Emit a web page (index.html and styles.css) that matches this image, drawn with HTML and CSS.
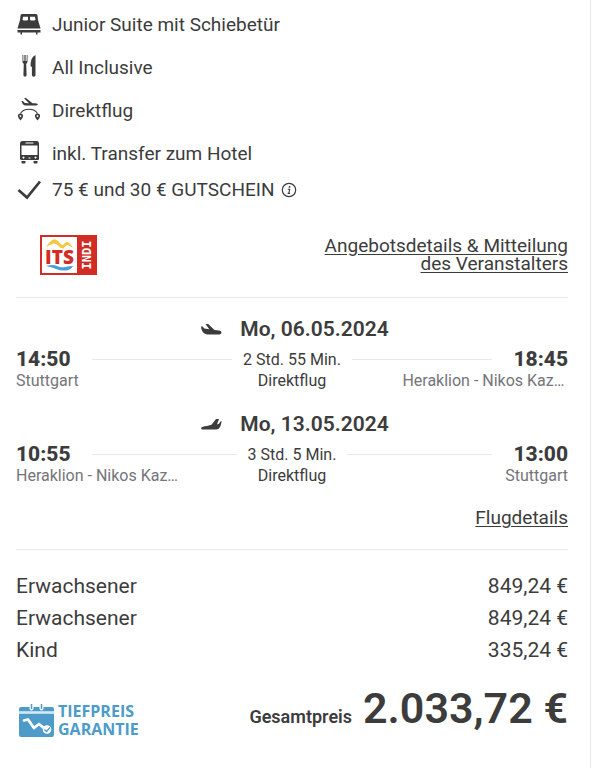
FILE: index.html
```html
<!DOCTYPE html>
<html lang="de">
<head>
<meta charset="utf-8">
<meta name="viewport" content="width=device-width, initial-scale=1">
<title>Angebot</title>
<link rel="stylesheet" href="styles.css">
</head>
<body>
<main class="offer">
  <ul class="features">
    <li class="feature">
      <svg class="feature-icon" viewBox="0 0 26 26" aria-hidden="true">
        <path d="M6 2h14q1.500 0 1.500 1.500L22 8l2.500 8.500h-23L4 8l.5-4.500Q4.500 2 6 2z"/>
        <path d="M7 4.800h5v3.200q-2.500 1-5.500 0zM14 4.800h5l.5 3.200q-3 1-5.500 0z" fill="#fff"/>
        <path d="M1.500 18h23v2.500h-23zM4.500 20.500h1.500v2h-1.500zM20 20.500h1.500v2H20z"/>
      </svg>
      Junior Suite mit Schiebetür
    </li>
    <li class="feature">
      <svg class="feature-icon" viewBox="0 0 26 26" aria-hidden="true">
        <path d="M6.500 0h.8v6h1.100V0h1.200v6h1.100V0h.8v6.500q0 1.800-1.300 2.300l.4 11.200q0 1.700-1.600 1.700T7.400 20l.4-11.200Q6.500 8.300 6.500 6.500z"/>
        <path d="M19.500 0v20q0 1.700-1.800 1.700T15.900 20V12l-1.400-1Q14.500 2 19.500 0z"/>
      </svg>
      All Inclusive
    </li>
    <li class="feature">
      <svg class="feature-icon" viewBox="0 0 26 26" aria-hidden="true">
        <path d="M5.500 3l1.300 0 2 2 4.200.2L8 .3 10 0 16.500 5.200h3q2 .2 2.500 1.300-.7 1-2.500 1H9Q6.500 7 5.500 3z"/>
        <path d="M4.500 15.500Q7 11.300 13 11.300T21.500 15.500" fill="none" stroke="currentColor" stroke-width="1.100"/>
        <path fill-rule="evenodd" d="M4.500 15.500a2.600 2.600 0 0 1 2.600 2.600q0 1.700-2.600 4.400-2.600-2.700-2.600-4.400a2.600 2.600 0 0 1 2.600-2.600zM4.500 17.200a.9.9 0 1 0 .01 0zM21.500 15.500a2.600 2.600 0 0 1 2.600 2.600q0 1.700-2.600 4.400-2.600-2.700-2.600-4.400a2.600 2.600 0 0 1 2.600-2.600zM21.500 17.200a.9.9 0 1 0 .01 0z"/>
      </svg>
      Direktflug
    </li>
    <li class="feature">
      <svg class="feature-icon" viewBox="0 0 26 26" aria-hidden="true">
        <path fill-rule="evenodd" d="M6 0h15Q23 0 23 2.500V18q0 1-1 1h-16Q4 19 4 18V2.500Q4 0 6 0zM9.500 1.500v1h8v-1zM5.500 4.500v9.500h16V4.500zM7.500 15.500a1 1 0 1 0 .01 0zM19.500 15.500a1 1 0 1 0 .01 0zM12.500 16.500v1h2v-1z"/>
        <path d="M5.500 20h4v1.500q0 1-1 1h-2q-1 0-1-1zM17.500 20h4v1.500q0 1-1 1h-2q-1 0-1-1z"/>
      </svg>
      inkl. Transfer zum Hotel
    </li>
  </ul>
  <div class="feature">
    <svg class="feature-icon" viewBox="0 0 26 26" aria-hidden="true"><path d="M2.500 13l8.500 7.500L24 4.500" fill="none" stroke="currentColor" stroke-width="2.700"/></svg>
    75 € und 30 € GUTSCHEIN
    <button class="info" type="button" aria-label="Info">
      <svg class="info-icon" viewBox="0 0 16 16" aria-hidden="true"><circle cx="8" cy="8" r="6.700" fill="none" stroke="currentColor" stroke-width="1.200"/><circle cx="8.500" cy="4.900" r=".9"/><path d="M6.800 7.200h1.900L7.800 11.400h1.300M6.600 11.400h1.200" fill="none" stroke="currentColor" stroke-width="1.100"/></svg>
    </button>
  </div>

  <div class="operator">
    <svg class="operator-logo" viewBox="0 0 57 40" role="img" aria-label="ITS INDI">
      <rect width="57" height="40" fill="#d32c25"/>
      <rect x="2" y="2" width="35" height="36" fill="#fff"/>
      <path d="M6 12Q12 3 15.500 4.500C18 5 21 10 22.500 10S25 6.500 27.500 7 31 10 33 13q-4-3-5.500-3t-4 3.500Q21 14 18.500 11T14 8.500Q11 9 6 12z" fill="#f4c744"/>
      <path d="M6 31q7-2 11 0t8 1 8-1q-2 4-7 4.500T16 34t-10-3z" fill="#4a9fd8"/>
      <text x="19.500" y="29" text-anchor="middle" class="its">ITS</text>
      <text transform="translate(51 20) rotate(-90)" text-anchor="middle" class="indi">INDI</text>
    </svg>
    <a class="operator-link" href="#details">Angebotsdetails &amp; Mitteilung<br>des Veranstalters</a>
  </div>

  <section class="flights">
    <article class="flight">
      <h2 class="flight-date">
        <svg class="plane" viewBox="0 0 22 14" aria-hidden="true"><path d="M1 4.500h1.500l1.800 2 5 .7L5.500 2h2.700l6.300 6 4.700.5q2.300.5 2.300 2T19.500 12.500H7Q1.200 11 1 4.500z"/></svg>
        Mo, 06.05.2024
      </h2>
      <div class="route">
        <strong class="time">14:50</strong><span class="line"></span>
        <span class="duration">2 Std. 55 Min.</span>
        <span class="line"></span><strong class="time time-end">18:45</strong>
      </div>
      <div class="places">
        <span class="place">Stuttgart</span><span class="stops">Direktflug</span><span class="place">Heraklion - Nikos Kaz…</span>
      </div>
    </article>
    <article class="flight">
      <h2 class="flight-date">
        <svg class="plane" viewBox="0 0 22 14" aria-hidden="true"><path d="M1 11Q2 9.500 7 9l4.500-1.200L16 2h3l-2 5.500 2-.8 1.300-2.200h1.400L20.500 9Q19 12.500 16 12.500H3Q1 12.500 1 11z"/></svg>
        Mo, 13.05.2024
      </h2>
      <div class="route">
        <strong class="time">10:55</strong><span class="line"></span>
        <span class="duration">3 Std. 5 Min.</span>
        <span class="line"></span><strong class="time time-end">13:00</strong>
      </div>
      <div class="places">
        <span class="place">Heraklion - Nikos Kaz…</span><span class="stops">Direktflug</span><span class="place place-end">Stuttgart</span>
      </div>
    </article>
    <a class="flight-link" href="#flug">Flugdetails</a>
  </section>

  <dl class="prices">
    <div class="price"><dt>Erwachsener</dt><dd>849,24 €</dd></div>
    <div class="price"><dt>Erwachsener</dt><dd>849,24 €</dd></div>
    <div class="price"><dt>Kind</dt><dd>335,24 €</dd></div>
  </dl>

  <footer class="summary">
    <div class="guarantee">
      <svg class="guarantee-icon" viewBox="0 0 35 34" aria-hidden="true">
        <path d="M2 4h8.500v2q2 3 4 0V4h6v2q2 3 4 0V4H33q2 0 2 2v2.500H0V6q0-2 2-2zM0 10.500h35v21q0 2.500-2 2.500H2q-2 0-2-2.500z" fill="#4c9bc9"/>
        <path d="M0 8.500h35v2H0z" fill="#d3e7f2"/>
        <path d="M12.500 1v5M22.500 1v5" stroke="#4c9bc9" stroke-width="1.500"/>
        <path d="M5 17.500l4-1 6 8.500 5-4 6 5" fill="none" stroke="#fff" stroke-width="2.800" stroke-linejoin="round" stroke-linecap="round"/>
        <circle cx="28" cy="26.500" r="4.300" fill="#fff"/><path d="M25.500 26.500l2 2 3.500-4" fill="none" stroke="#4c9bc9" stroke-width="1.300"/>
      </svg>
      <span>TIEFPREIS<br>GARANTIE</span>
    </div>
    <p class="total"><span class="total-label">Gesamtpreis</span><strong class="total-value">2.033,72 €</strong></p>
  </footer>
</main>
</body>
</html>
```
FILE: styles.css
```css
* { box-sizing: border-box; }

body {
  margin: 0;
  background: #fff;
  color: #3c3c3c;
  font: 19px/24px Roboto, "Liberation Sans", sans-serif;
}

a { color: inherit; text-underline-offset: 2px; }
svg { fill: currentColor; flex: none; }
h2, p, dl, dd, ul { margin: 0; padding: 0; }

.offer {
  min-height: 100vh;
  margin-right: 3px;
  padding: 12px 22px 0 16px;
  border-right: 1px solid #e8e8e8;
}

.features {
  display: grid;
  gap: 17px;
  margin-bottom: 10px;
  list-style: none;
}

.feature { display: flex; align-items: center; }
.feature-icon { width: 26px; height: 26px; margin-right: 10px; }

.info {
  display: flex;
  margin-left: 6px;
  padding: 0;
  border: 0;
  background: none;
  color: inherit;
}
.info-icon { width: 16px; height: 16px; }

.operator {
  display: flex;
  justify-content: space-between;
  align-items: flex-start;
  margin-top: 32px;
  padding: 0 0 22px 24px;
  border-bottom: 1px solid #e8e8e8;
}
.operator-logo { width: 57px; height: 40px; }
.its { font: 800 19px "Open Sans", sans-serif; fill: #d32c25; }
.indi { font: 700 12px "DejaVu Sans Mono", monospace; fill: #fff; }
.operator-link { margin-top: 2px; line-height: 18px; text-align: right; }

.flights {
  padding: 17px 0 19px;
  border-bottom: 1px solid #e8e8e8;
}
.flight { margin-bottom: 19px; font-size: 16px; line-height: 21px; }
.flight-date {
  display: flex;
  justify-content: center;
  align-items: center;
  gap: 18px;
  margin-bottom: 6px;
  padding-left: 5px;
  font-size: 21px;
  line-height: 28px;
  font-weight: 600;
}
.plane { width: 22px; height: 14px; }
.route { display: flex; align-items: center; }
.time { width: 76px; font-size: 21px; font-weight: 800; }
.time-end { text-align: right; }
.line { flex: 1; height: 1px; background: #e8e8e8; }
.duration { margin: 0 11px; }
.places { display: flex; justify-content: space-between; }
.place { width: 30%; color: #74747a; white-space: nowrap; }
.place-end { text-align: right; }
.flight-link { display: block; width: fit-content; margin: 20px 0 0 auto; }

.prices { padding-top: 20px; font-size: 21px; line-height: 32px; }
.price { display: flex; justify-content: space-between; }

.summary {
  display: flex;
  justify-content: space-between;
  align-items: flex-start;
  margin-top: 16px;
}
.guarantee {
  display: flex;
  align-items: center;
  gap: 4px;
  margin: 20px 0 0 3px;
  color: #4c9bc9;
  font: 700 16px/18px "Open Sans", sans-serif;
}
.guarantee-icon { width: 35px; height: 34px; }
.total { display: flex; align-items: baseline; gap: 11px; font-weight: 600; }
.total-label { font-size: 18px; }
.total-value { font-size: 43px; line-height: 52px; font-weight: 600; }
```
